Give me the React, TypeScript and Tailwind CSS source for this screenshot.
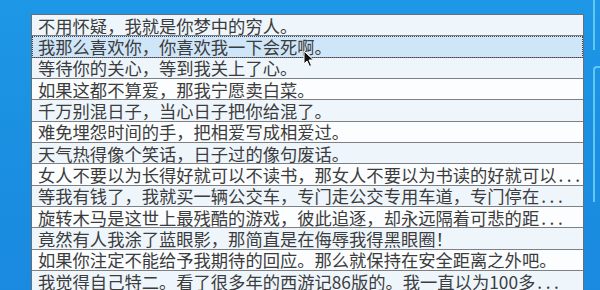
import React from 'react';

const lines = [
  '不用怀疑，我就是你梦中的穷人。',
  '我那么喜欢你，你喜欢我一下会死啊。',
  '等待你的关心，等到我关上了心。',
  '如果这都不算爱，那我宁愿卖白菜。',
  '千万别混日子，当心日子把你给混了。',
  '难免埋怨时间的手，把相爱写成相爱过。',
  '天气热得像个笑话，日子过的像句废话。',
  '女人不要以为长得好就可以不读书，那女人不要以为书读的好就可以...',
  '等我有钱了，我就买一辆公交车，专门走公交专用车道，专门停在...',
  '旋转木马是这世上最残酷的游戏，彼此追逐，却永远隔着可悲的距...',
  '竟然有人我涂了蓝眼影，那简直是在侮辱我得黑眼圈！',
  '如果你注定不能给予我期待的回应。那么就保持在安全距离之外吧。',
  '我觉得自己特二。看了很多年的西游记86版的。我一直以为100多...',
];

// mouse pointer over the selected row
const Cursor = () => (
  <svg width="12" height="18" viewBox="0 0 12 18" className="absolute z-10 left-[271px] top-[14px]">
    <path d="M1 1 L1 14 L4 11 L6.5 16.5 L8.5 15.5 L6 10 L10.5 10 Z" fill="#111" stroke="#fff" strokeWidth="1" />
  </svg>
);

const Line = ({ text }: { text: string }) => {
  if (text.endsWith('...')) {
    return (
      <span className="inline-block leading-[21px]">
        {text.slice(0, -3)}
        <span className="tracking-[3.6px] pl-[2px]">...</span>
      </span>
    );
  }
  return <span className="inline-block leading-[21px]">{text}</span>;
};

const App: React.FC = () => {
  return (
    <div className="w-[600px] h-[290px] overflow-hidden flex bg-[linear-gradient(180deg,#1e97e6_0%,#1a8ee0_60%,#1a8ae0_100%)]">
      <div className="pt-[14px] pl-[31px]">
        <div
          className="w-[553px] flex flex-col border border-[#6b6f73] border-b-0"
          style={{ fontFamily: '"Noto Sans CJK SC", "Noto Sans", sans-serif' }}
        >
          {lines.map((line, i) => {
            const selected = i === 1;
            const bg = selected ? 'bg-[#cfe5f8]' : i % 2 === 0 ? 'bg-[#eef6fc]' : 'bg-[#fbfdff]';
            return (
              <div
                key={i}
                className={`relative h-[21.33px] shrink-0 flex items-center pl-[6px] border-b border-[#7d8185] text-[17.3px] leading-[21px] text-[#3c3c3c] whitespace-nowrap ${bg} ${selected ? 'outline outline-1 outline-dotted outline-[#445] -outline-offset-1' : ''}`}
              >
                <Line text={line} />
                {selected && <Cursor />}
              </div>
            );
          })}
        </div>
      </div>

      {/* edge of the window behind, on the right */}
      <div className="ml-[9px] flex flex-col">
        <div className="w-[2px] h-[50px] bg-[#5fc8f5]" />
        <div className="mt-[16px] w-[10px] h-[136px] border-l-2 border-t-2 border-[#5fc8f5] rounded-tl-sm" />
      </div>
    </div>
  );
};

export default App;
